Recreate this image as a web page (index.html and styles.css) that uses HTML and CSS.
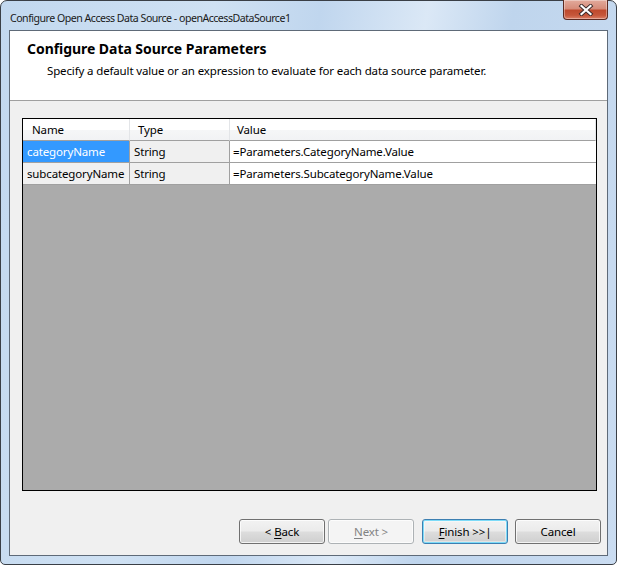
FILE: index.html
```html
<!DOCTYPE html>
<html>
<head>
<meta charset="utf-8">
<link rel="stylesheet" href="styles.css">
</head>
<body>
<div class="window">
  <div class="titlebar">
    <span class="title">Configure Open Access Data Source - openAccessDataSource1</span>
    <div class="close">
      <svg width="16" height="12" viewBox="0 0 16 12">
        <path d="M3.5 2 L12.5 10 M12.5 2 L3.5 10" stroke="#3a2a2a" stroke-width="4" stroke-linecap="square"/>
        <path d="M3.5 2 L12.5 10 M12.5 2 L3.5 10" stroke="#ffffff" stroke-width="2.2" stroke-linecap="square"/>
      </svg>
    </div>
  </div>
  <div class="client">
    <div class="header">
      <div class="h-title">Configure Data Source Parameters</div>
      <div class="h-sub">Specify a default value or an expression to evaluate for each data source parameter.</div>
    </div>
    <div class="body">
      <div class="grid">
        <div class="row head">
          <div class="c c1">Name</div>
          <div class="c c2">Type</div>
          <div class="c c3">Value</div>
        </div>
        <div class="row">
          <div class="c c1 ro sel">categoryName</div>
          <div class="c c2 ro">String</div>
          <div class="c c3">=Parameters.CategoryName.Value</div>
        </div>
        <div class="row">
          <div class="c c1 ro">subcategoryName</div>
          <div class="c c2 ro">String</div>
          <div class="c c3">=Parameters.SubcategoryName.Value</div>
        </div>
      </div>
      <div class="buttons">
        <div class="btn"><span>&lt; <u>B</u>ack</span></div>
        <div class="btn disabled"><span><u>N</u>ext &gt;</span></div>
        <div class="btn default"><span><u>F</u>inish &gt;&gt;|</span></div>
        <div class="btn"><span>Cancel</span></div>
      </div>
    </div>
  </div>
</div>
</body>
</html>
```

FILE: styles.css
```css
html, body {
  margin: 0;
  padding: 0;
  background: #ffffff;
}
body {
  width: 617px;
  height: 565px;
  font-family: "Noto Sans", "Open Sans", sans-serif;
  font-size: 11.5px;
  letter-spacing: -0.14px;
  color: #000;
}
.window {
  box-sizing: border-box;
  width: 617px;
  height: 565px;
  border: 1px solid #3a3f46;
  border-radius: 7px 7px 5px 5px;
  background: linear-gradient(100deg, #c2d8ef 0%, #cfe1f3 30%, #c0d6ee 45%, #dbe8f6 60%, #bfd5ed 72%, #cadcf1 100%);
  padding: 0 8px 8px 8px;
  display: flex;
  flex-direction: column;
}
.titlebar {
  height: 29px;
  display: flex;
  align-items: center;
  position: relative;
}
.title {
  font-size: 10.6px;
  color: #1a1a1a;
  padding-left: 1px;
  padding-top: 4px;
  letter-spacing: -0.5px;
}
.close {
  position: absolute;
  right: 0;
  top: -1px;
  width: 45px;
  height: 20px;
  box-sizing: border-box;
  border: 1px solid #5b2a22;
  border-top: none;
  border-radius: 0 0 4px 4px;
  background: linear-gradient(#e2aa9c 0%, #d68c7a 45%, #bf4a2e 55%, #c5563a 80%, #dc7f66 100%);
  display: flex;
  align-items: center;
  justify-content: center;
  box-shadow: inset 0 0 0 1px rgba(255,255,255,0.35);
}
.client {
  flex: 1;
  border: 1px solid #5e6a78;
  background: #f0f0f0;
  display: flex;
  flex-direction: column;
}
.header {
  background: #ffffff;
  height: 70px;
  border-bottom: 1px solid #a0a0a0;
  box-sizing: border-box;
  padding: 9px 0 0 17px;
}
.h-title {
  font-weight: bold;
  font-size: 14px;
  letter-spacing: -0.05px;
  line-height: 18px;
}
.h-sub {
  padding-left: 20px;
  margin-top: 5px;
  line-height: 16px;
}
.body {
  flex: 1;
  display: flex;
  flex-direction: column;
  padding: 17px 6px 11px 12px;
}
.grid {
  width: 575px;
  height: 373px;
  box-sizing: border-box;
  border: 1px solid #000;
  background: #ababab;
}
.row {
  display: flex;
  height: 22px;
}
.row.head {
  height: 22px;
  background: linear-gradient(#ffffff 0%, #ffffff 50%, #f5f6f7 51%, #f1f2f4 100%);
}
.c {
  box-sizing: border-box;
  height: 100%;
  display: flex;
  align-items: center;
  border-right: 1px solid #a0a0a0;
  border-bottom: 1px solid #a0a0a0;
  padding-left: 4px;
  white-space: nowrap;
  overflow: hidden;
}
.head .c {
  border-right: 1px solid #e3e5e8;
  border-bottom: 1px solid #a0a0a0;
  padding-left: 9px;
}
.head .c2, .head .c3 { padding-left: 8px; }
.c1 { width: 107px; }
.c2 { width: 100px; }
.c3 { flex: 1; background: #ffffff; border-right: none; padding-left: 3px; }
.head .c3 { background: transparent; padding-left: 7px; }
.ro { background: #f0f0f0; }
.sel { background: #3399ff; color: #ffffff; }
.buttons {
  margin-top: auto;
  display: flex;
  justify-content: flex-end;
  gap: 3px;
}
.btn {
  box-sizing: border-box;
  width: 86px;
  height: 25px;
  border: 1px solid #707070;
  border-radius: 3px;
  background: linear-gradient(#f2f2f2 0%, #ebebeb 49%, #dddddd 51%, #cfcfcf 100%);
  box-shadow: inset 0 0 0 1px rgba(255,255,255,0.75);
  display: flex;
  align-items: center;
  justify-content: center;
}
.btn.disabled {
  border-color: #adb2b5;
  background: #f4f4f4;
  color: #838383;
  margin-right: 5px;
}
.btn.default {
  border-color: #3c7fb1;
  box-shadow: inset 0 0 0 1px #7ddbf8, inset 0 0 0 2px rgba(255,255,255,0.4);
  background: linear-gradient(#f2f2f2 0%, #ebebeb 49%, #dddddd 51%, #cfcfcf 100%);
  margin-right: 4px;
}
u { text-decoration: underline; text-underline-offset: 2px; }
```
